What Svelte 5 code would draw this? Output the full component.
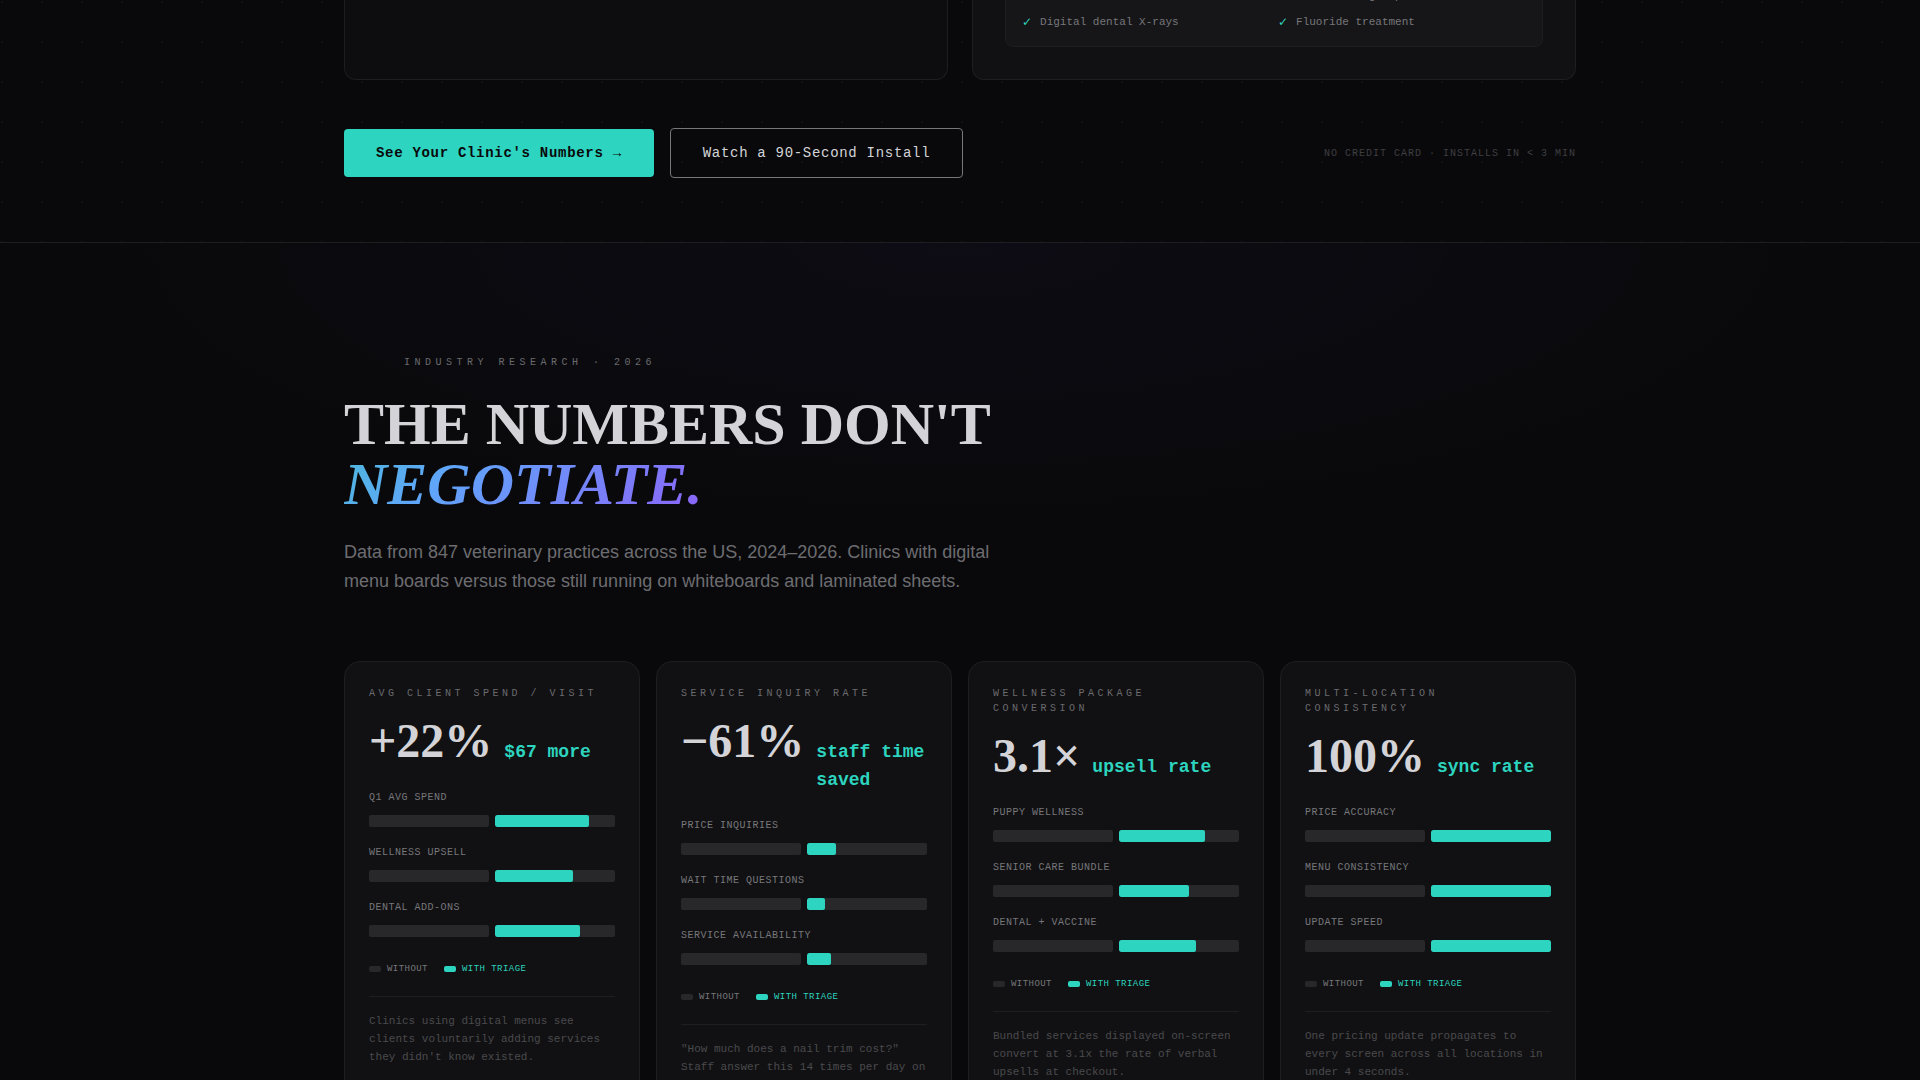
<script>
  const included = [
    'Full oral exam',
    'Full scaling & polish',
    'Digital dental X-rays',
    'Fluoride treatment'
  ];

  // "bars" holds the share of each right-hand bar that is filled, in percent
  const stats = [
    {
      label: 'Avg Client Spend / Visit',
      value: '+22%',
      detail: '$67 more',
      bars: [
        { name: 'Q1 Avg Spend', value: 78 },
        { name: 'Wellness Upsell', value: 65 },
        { name: 'Dental Add-ons', value: 71 }
      ],
      note: "Clinics using digital menus see clients voluntarily adding services they didn't know existed."
    },
    {
      label: 'Service Inquiry Rate',
      value: '−61%',
      detail: 'staff time saved',
      bars: [
        { name: 'Price Inquiries', value: 24 },
        { name: 'Wait Time Questions', value: 15 },
        { name: 'Service Availability', value: 20 }
      ],
      note: '"How much does a nail trim cost?" Staff answer this 14 times per day on average.'
    },
    {
      label: 'Wellness Package Conversion',
      value: '3.1×',
      detail: 'upsell rate',
      bars: [
        { name: 'Puppy Wellness', value: 72 },
        { name: 'Senior Care Bundle', value: 58 },
        { name: 'Dental + Vaccine', value: 64 }
      ],
      note: 'Bundled services displayed on-screen convert at 3.1x the rate of verbal upsells at checkout.'
    },
    {
      label: 'Multi-Location Consistency',
      value: '100%',
      detail: 'sync rate',
      bars: [
        { name: 'Price Accuracy', value: 100 },
        { name: 'Menu Consistency', value: 100 },
        { name: 'Update Speed', value: 100 }
      ],
      note: 'One pricing update propagates to every screen across all locations in under 4 seconds.'
    }
  ];
</script>

<section class="compare">
  <div class="container">
    <div class="panels">
      <div class="panel"></div>
      <div class="panel panel-bright">
        <ul class="included">
          {#each included as item}
            <li><span class="check">✓</span>{item}</li>
          {/each}
        </ul>
      </div>
    </div>

    <div class="actions">
      <button type="button" class="primary">See Your Clinic's Numbers →</button>
      <button type="button" class="secondary">Watch a 90-Second Install</button>
      <span class="fine-print">No credit card · Installs in &lt; 3 min</span>
    </div>
  </div>
</section>

<section class="research">
  <div class="container">
    <p class="eyebrow">Industry Research · 2026</p>
    <h2>The numbers don't<br /><em>negotiate.</em></h2>
    <p class="lead">
      Data from 847 veterinary practices across the US, 2024–2026. Clinics with digital menu boards
      versus those still running on whiteboards and laminated sheets.
    </p>

    <div class="stats">
      {#each stats as stat}
        <article class="stat">
          <h3>{stat.label}</h3>
          <div class="figure">
            <strong>{stat.value}</strong>
            <span>{stat.detail}</span>
          </div>

          <div class="bars">
            {#each stat.bars as bar}
              <div class="bar-group">
                <span class="bar-name">{bar.name}</span>
                <div class="tracks">
                  <div class="track"></div>
                  <div class="track"><div class="fill" style="width: {bar.value}%"></div></div>
                </div>
              </div>
            {/each}
          </div>

          <div class="legend">
            <span class="key">Without</span>
            <span class="key key-with">With Triage</span>
          </div>

          <p class="note">{stat.note}</p>
        </article>
      {/each}
    </div>
  </div>
</section>

<style>
  :global(body) {
    background: #09090b;
    color: #d4d4d8;
    font-family: "Liberation Sans", Arial, sans-serif;
  }

  .container {
    max-width: 1232px;
    margin: 0 auto;
    padding: 0 32px;
  }

  /* Comparison panels and call to action */
  .compare {
    padding-bottom: 64px;
    border-bottom: 1px solid #1e1e20;
    background-image: radial-gradient(circle, rgba(255, 255, 255, 0.03) 1px, transparent 1px);
    background-size: 40px 40px;
    background-position: 22px 22px;
  }

  .panels {
    display: grid;
    grid-template-columns: 1fr 1fr;
    gap: 24px;
    height: 80px;
  }

  .panel {
    display: flex;
    flex-direction: column;
    justify-content: flex-end;
    overflow: hidden;
    padding: 0 32px 32px;
    border: 1px solid #1e1e20;
    border-top: none;
    border-radius: 0 0 12px 12px;
    background: #0d0d0f;
  }

  .panel-bright {
    background: #111113;
  }

  .included {
    display: grid;
    grid-template-columns: 1fr 1fr;
    gap: 8px;
    margin: 0;
    padding: 16px 16px 15px;
    border: 1px solid #1e1e20;
    border-radius: 8px;
    background: #161618;
    list-style: none;
    font: 11px/18px "Liberation Mono", monospace;
    color: #77777b;
  }

  .included li {
    display: flex;
    gap: 8px;
  }

  .check {
    font-family: "DejaVu Sans", sans-serif;
    font-size: 12px;
    color: #2dd4bf;
  }

  .actions {
    display: flex;
    align-items: center;
    gap: 16px;
    margin-top: 48px;
  }

  button {
    padding: 16px 32px;
    border: none;
    border-radius: 4px;
    font: 14px/16px "Liberation Mono", monospace;
    letter-spacing: 0.05em;
    cursor: pointer;
  }

  .primary {
    background: #2dd4bf;
    color: #09090b;
    font-weight: bold;
  }

  .secondary {
    border: 1px solid #77777b;
    background: transparent;
    color: #d4d4d8;
  }

  .fine-print {
    margin-left: auto;
    font: 10px/15px "Liberation Mono", monospace;
    letter-spacing: 0.1em;
    text-transform: uppercase;
    color: #3f3f42;
  }

  /* Research section */
  .research {
    padding: 111px 0 120px;
    background: radial-gradient(ellipse 80% 50% at 50% 0%, rgba(124, 92, 255, 0.04), transparent 60%);
  }

  .eyebrow {
    margin: 0 0 23px;
    padding-left: 60px;
    font: 10px/17px "Liberation Mono", monospace;
    letter-spacing: 0.45em;
    text-transform: uppercase;
    color: #6b6b6f;
  }

  h2 {
    margin: 0 0 24px;
    font: bold 60px/60px "Liberation Serif", serif;
    text-transform: uppercase;
    color: #d4d4d8;
  }

  h2 em {
    background: linear-gradient(135deg, #4db8dc 0%, #60a5fa 30%, #8b63f8 100%);
    background-clip: text;
    color: transparent;
  }

  .lead {
    max-width: 680px;
    margin: 0 0 65px;
    font-size: 18px;
    line-height: 29px;
    color: #6d6d71;
  }

  .stats {
    display: grid;
    grid-template-columns: repeat(4, 1fr);
    gap: 16px;
  }

  .stat {
    padding: 24px;
    border: 1px solid #1e1e20;
    border-radius: 16px;
    background: #111113;
    font-family: "Liberation Mono", monospace;
  }

  h3 {
    margin: 0 0 16px;
    font-size: 10px;
    font-weight: normal;
    line-height: 15px;
    letter-spacing: 0.35em;
    text-transform: uppercase;
    color: #6b6b6f;
  }

  .figure {
    display: flex;
    align-items: baseline;
    gap: 12px;
    margin-bottom: 24px;
  }

  .figure strong {
    font: bold 48px/48px "Liberation Serif", serif;
  }

  .figure span {
    font-size: 18px;
    font-weight: bold;
    line-height: 28px;
    color: #2dd4bf;
  }

  .bars {
    display: grid;
    gap: 18px;
  }

  .bar-group {
    display: grid;
    gap: 10px;
  }

  .bar-name {
    font-size: 10px;
    line-height: 15px;
    letter-spacing: 0.05em;
    text-transform: uppercase;
    color: #77777b;
  }

  .tracks {
    display: grid;
    grid-template-columns: 1fr 1fr;
    gap: 6px;
  }

  .track {
    height: 12px;
    overflow: hidden;
    border-radius: 2px;
    background: #28282a;
  }

  .fill {
    height: 100%;
    border-radius: 2px;
    background: #2dd4bf;
  }

  .legend {
    display: flex;
    gap: 16px;
    margin: 24px 0 19px;
    font-size: 9px;
    line-height: 16px;
    letter-spacing: 0.05em;
    text-transform: uppercase;
    color: #77777b;
  }

  .key {
    display: flex;
    align-items: center;
    gap: 6px;
  }

  .key::before {
    content: "";
    width: 12px;
    height: 6px;
    border-radius: 2px;
    background: #28282a;
  }

  .key-with {
    color: #2dd4bf;
  }

  .key-with::before {
    background: #2dd4bf;
  }

  .note {
    margin: 0;
    padding-top: 15px;
    border-top: 1px solid #1e1e20;
    font-size: 11px;
    line-height: 18px;
    color: #4a4a4d;
  }

  @media (max-width: 1100px) {
    .stats {
      grid-template-columns: 1fr 1fr;
    }

    .actions {
      flex-wrap: wrap;
    }
  }
</style>
